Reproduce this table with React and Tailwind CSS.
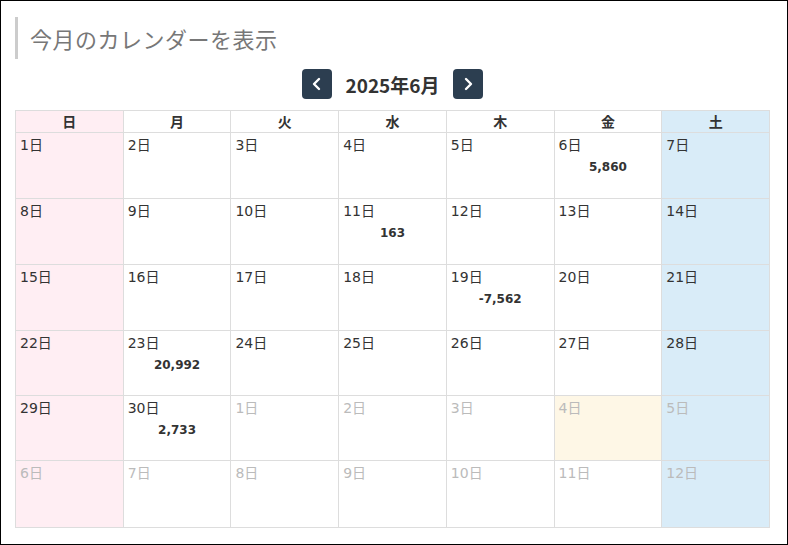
import React from 'react';

const WEEK = ['日', '月', '火', '水', '木', '金', '土'];

// 2025年6月 — 前後の月の日付も含めて6週分
const buildDays = () => {
  const days = [];
  for (let d = 1; d <= 30; d++) days.push({ day: d, current: true });
  for (let d = 1; d <= 12; d++) days.push({ day: d, current: false });
  return days;
};

const AMOUNTS = { 6: '5,860', 11: '163', 19: '-7,562', 23: '20,992', 30: '2,733' };

const ChevronLeft = () => (
  <svg width="16" height="16" viewBox="0 0 16 16" fill="none">
    <path d="M10 3L5 8l5 5" stroke="white" strokeWidth="2.4" strokeLinecap="round" strokeLinejoin="round" />
  </svg>
);

const ChevronRight = () => (
  <svg width="16" height="16" viewBox="0 0 16 16" fill="none">
    <path d="M6 3l5 5-5 5" stroke="white" strokeWidth="2.4" strokeLinecap="round" strokeLinejoin="round" />
  </svg>
);

const App = () => {
  const days = buildDays();

  const cellBg = (idx, item) => {
    const col = idx % 7;
    if (!item.current && item.day === 4) return 'bg-[#fef7e6]';
    if (col === 0) return 'bg-[#ffeef3]';
    if (col === 6) return 'bg-[#d9ecf8]';
    return 'bg-white';
  };

  return (
    <div
      className="w-[788px] h-[545px] border border-black bg-white overflow-hidden"
      style={{ fontFamily: '"Noto Sans CJK JP", "DejaVu Sans", sans-serif' }}
    >
      {/* 見出し */}
      <div className="ml-[14px] mt-[16px] h-[42px] border-l-[3px] border-[#cccccc] pl-[12px] flex items-center">
        <h2 className="text-[22px] tracking-[0.5px] text-[#777777] leading-none">今月のカレンダーを表示</h2>
      </div>

      {/* 月ナビ */}
      <div className="w-[755px] ml-[14px] mt-[10px] flex items-center justify-center gap-[12px]">
        <button className="w-[30px] h-[30px] rounded-[4px] bg-[#2c3e50] flex items-center justify-center">
          <ChevronLeft />
        </button>
        <span className="text-[19px] font-bold text-[#333333] leading-none px-[1px]">2025年6月</span>
        <button className="w-[30px] h-[30px] rounded-[4px] bg-[#2c3e50] flex items-center justify-center">
          <ChevronRight />
        </button>
      </div>

      {/* カレンダー */}
      <div className="w-[755px] ml-[14px] mt-[11px] grid grid-cols-7 grid-rows-[21px_65px_65px_65px_64px_64px_66px] gap-px p-px bg-[#dddddd]">
        {WEEK.map((w, i) => (
          <div
            key={w}
            className={`flex items-center justify-center text-[14px] font-bold text-[#333333] ${
              i === 0 ? 'bg-[#ffeef3]' : i === 6 ? 'bg-[#d9ecf8]' : 'bg-white'
            }`}
          >
            {w}
          </div>
        ))}
        {days.map((item, idx) => (
          <div key={idx} className={`px-[4px] pt-[2px] ${cellBg(idx, item)}`}>
            <div
              className={`text-[14px] leading-[20px] ${item.current ? 'text-[#333333]' : 'text-[#bbbbbb]'}`}
              style={{ fontFamily: '"DejaVu Sans", "Noto Sans CJK JP", sans-serif' }}
            >
              {item.day}日
            </div>
            {item.current && AMOUNTS[item.day] && (
              <div
                className="text-center text-[12px] font-bold text-[#333333] leading-[18px] mt-[3px]"
                style={{ fontFamily: '"DejaVu Sans", sans-serif' }}
              >
                {AMOUNTS[item.day]}
              </div>
            )}
          </div>
        ))}
      </div>
    </div>
  );
};

export default App;
